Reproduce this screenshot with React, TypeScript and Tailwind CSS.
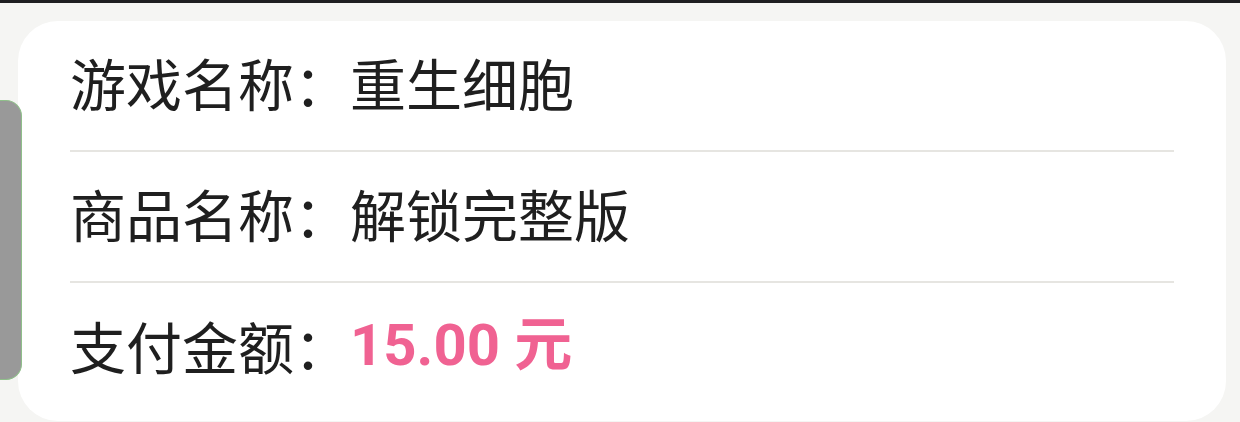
const rows = [
  { label: "游戏名称：", value: "重生细胞" },
  { label: "商品名称：", value: "解锁完整版" },
];

export default function App() {
  return (
    <div className="relative w-[1240px] h-[422px] overflow-hidden bg-[#f5f5f3] font-['Noto_Sans_CJK_SC',sans-serif]">
      <div className="h-[3px] bg-[#1e1e21]" />
      <div className="pl-[18px] pr-[14px] pt-[18px]">
        <div className="bg-white rounded-[40px] px-[52px] pb-[6px]">
          {rows.map((row) => (
            <div
              key={row.label}
              className="h-[131px] pb-[8px] flex items-center border-b-2 border-[#e6e5e1] text-[56px] leading-none text-[#1f1f1f]"
            >
              <span>{row.label}</span>
              <span>{row.value}</span>
            </div>
          ))}
          <div className="h-[132px] pb-[8px] flex items-center text-[56px] leading-none text-[#1f1f1f]">
            <span>支付金额：</span>
            <span className="text-[58px] font-bold text-[#f06292] font-['Roboto','Noto_Sans_CJK_SC',sans-serif]">
              15.00 元
            </span>
          </div>
        </div>
      </div>
      {/* edge panel handle */}
      <div className="absolute left-0 top-[100px] w-[22px] h-[280px] bg-[#999999] rounded-r-[16px] border border-l-0 border-[#8fbf8a]" />
    </div>
  );
}
